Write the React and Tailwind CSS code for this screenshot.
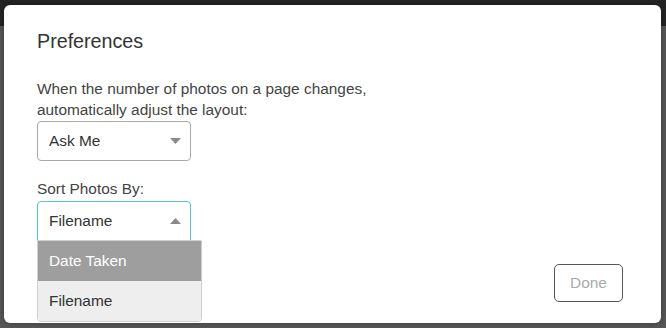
import { useState } from "react";

function Caret({ up }) {
  return (
    <svg width="11" height="6" viewBox="0 0 11 6" className="shrink-0">
      {up ? (
        <polygon points="0,6 11,6 5.5,0" fill="#8a8a8a" />
      ) : (
        <polygon points="0,0 11,0 5.5,6" fill="#8a8a8a" />
      )}
    </svg>
  );
}

export default function App() {
  const [layout] = useState("Ask Me");
  const [sortBy] = useState("Filename");
  const options = ["Date Taken", "Filename"];

  return (
    <div
      className="h-[328px] w-[666px] overflow-hidden bg-[#575757] relative"
      style={{ fontFamily: '"Liberation Sans", Arial, sans-serif' }}
    >
      <div className="h-[26px] bg-[#242424]" />
      <div className="absolute left-[4px] top-[5px] w-[657px] h-[318px] bg-white rounded-[6px] shadow-[0_0_6px_rgba(0,0,0,0.35)]">
        <div className="pl-[33px] pr-[38px] pt-[24px]">
          <h2 className="text-[19.7px] leading-[24px] text-[#333]">Preferences</h2>

          <p className="mt-[25px] text-[15.4px] leading-[21px] text-[#444]">
            When the number of photos on a page changes,
            <br />
            automatically adjust the layout:
          </p>

          <div className="mt-[1px] w-[154px] h-[40px] border border-[#a9a9a9] rounded-[4px] flex items-center justify-between pl-[11px] pr-[9px]">
            <span className="text-[15.4px] text-[#333]">{layout}</span>
            <Caret />
          </div>

          <div className="mt-[17px] text-[15.4px] leading-[21px] text-[#444]">Sort Photos By:</div>

          <div className="relative mt-[2px] w-[154px]">
            <div className="h-[40px] border border-[#5bc0de] rounded-t-[4px] flex items-center justify-between pl-[11px] pr-[9px]">
              <span className="text-[15.4px] text-[#333]">{sortBy}</span>
              <Caret up />
            </div>
            <div className="absolute left-0 top-[39px] w-[165px] border border-[#cfcfcf] rounded-b-[4px] overflow-hidden">
              {options.map((o) => (
                <div
                  key={o}
                  className={
                    o === "Date Taken"
                      ? "h-[40px] flex items-center pl-[11px] text-[15.4px] bg-[#9e9e9e] text-white"
                      : "h-[40px] flex items-center pl-[11px] text-[15.4px] bg-[#eeeeee] text-[#333]"
                  }
                >
                  {o}
                </div>
              ))}
            </div>
          </div>
        </div>

        <div className="absolute right-[38px] top-[259px]">
          <button className="w-[69px] h-[38px] border border-[#555] rounded-[5px] text-[15.4px] text-[#aaa] bg-white">
            Done
          </button>
        </div>
      </div>
    </div>
  );
}
